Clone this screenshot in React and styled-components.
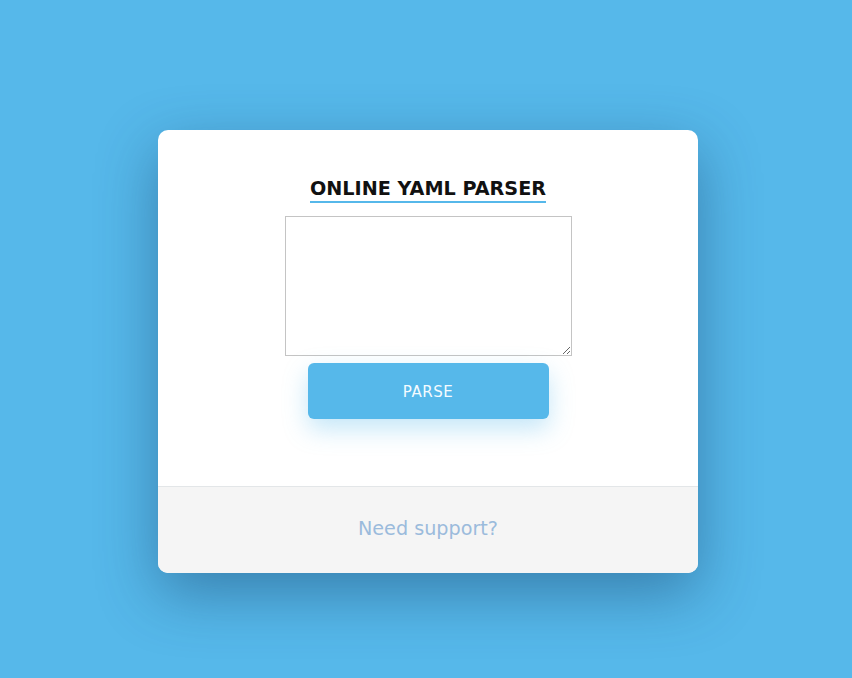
import styled, { createGlobalStyle } from "styled-components";

const GlobalStyle = createGlobalStyle`
    html, body {
        margin: 0;
        padding: 0;
        background: #56b8ea;
        font-family: "DejaVu Sans", sans-serif;
    }
`;

const Page = styled.div`
    min-height: 678px;
    display: flex;
    justify-content: center;
    align-items: flex-start;
    padding: 130px 0 0 4px;
    box-sizing: border-box;
`;

const Card = styled.div`
    width: 540px;
    background: #fff;
    border-radius: 10px;
    overflow: hidden;
    box-shadow: 0 20px 60px rgba(20, 60, 100, 0.45);
`;

const Body = styled.div`
    display: flex;
    flex-direction: column;
    align-items: center;
    padding: 48px 0 67px;
`;

const Title = styled.h1`
    margin: 0;
    font-size: 19.2px;
    line-height: 22px;
    font-weight: bold;
    color: #111;
    padding-bottom: 1px;
    border-bottom: 2px solid #56b8ea;
`;

const Input = styled.textarea`
    margin-top: 13px;
    width: 287px;
    height: 140px;
    box-sizing: border-box;
    border: 1px solid #c4c4c4;
    font-family: "DejaVu Sans Mono", monospace;
    font-size: 13px;
    outline: none;
`;

const Button = styled.button`
    margin-top: 7px;
    width: 241px;
    height: 56px;
    padding-top: 3px;
    border: none;
    border-radius: 6px;
    background: #56b8ea;
    color: #f4fbff;
    font-family: "DejaVu Sans", sans-serif;
    font-size: 15px;
    letter-spacing: 0.5px;
    cursor: pointer;
    box-shadow: 0 10px 25px rgba(86, 184, 234, 0.35);
`;

const Footer = styled.div`
    background: #f5f5f5;
    border-top: 1px solid #e3e6e8;
    height: 87px;
    box-sizing: border-box;
    padding-bottom: 3px;
    display: flex;
    align-items: center;
    justify-content: center;
`;

const SupportLink = styled.a`
    color: #9bbbdc;
    font-size: 19.2px;
    text-decoration: none;
`;

export default function App() {
    return (
        <>
            <GlobalStyle />
            <Page>
                <Card>
                    <Body>
                        <Title>ONLINE YAML PARSER</Title>
                        <Input />
                        <Button>PARSE</Button>
                    </Body>
                    <Footer>
                        <SupportLink href="#">Need support?</SupportLink>
                    </Footer>
                </Card>
            </Page>
        </>
    );
}
